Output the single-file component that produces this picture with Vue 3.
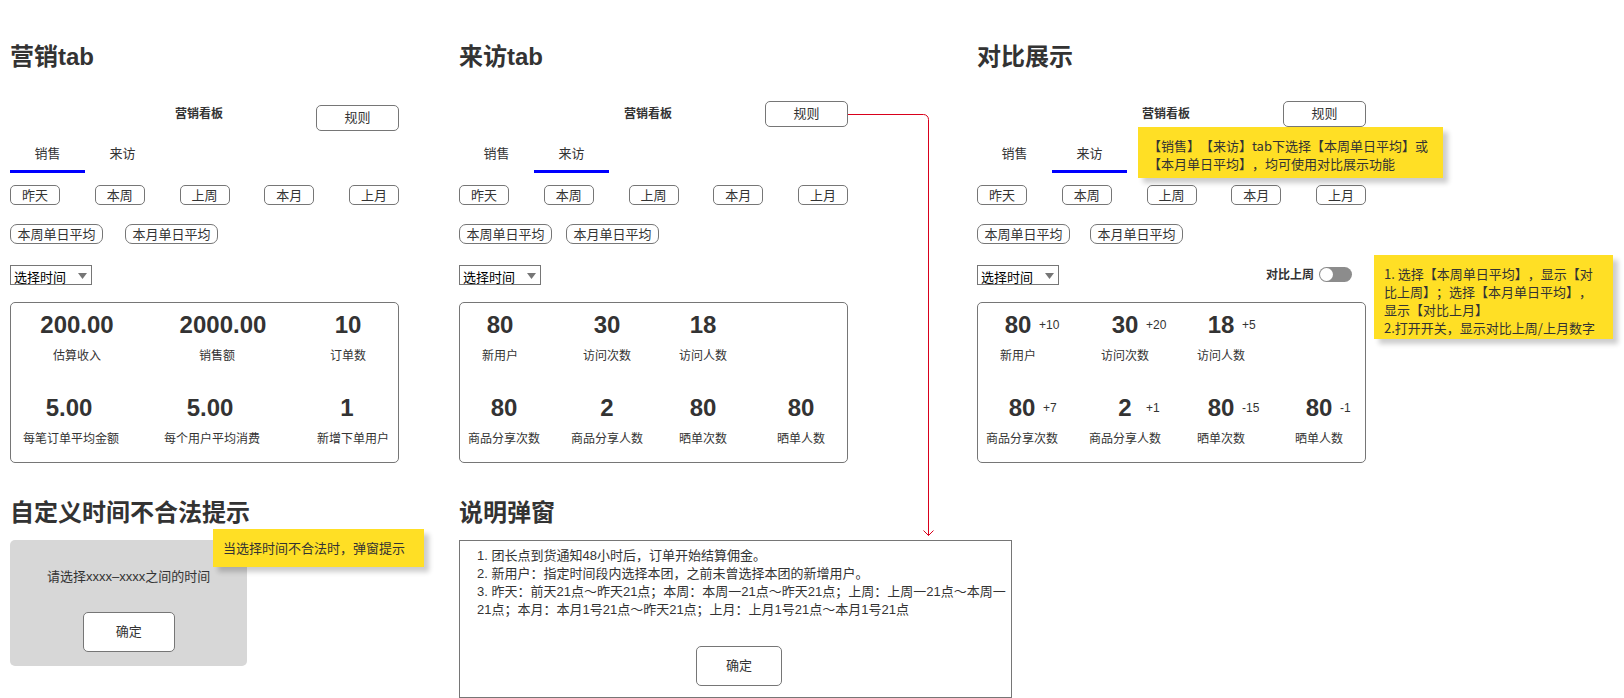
<script setup>
import { ref } from 'vue'

const periods = ['昨天', '本周', '上周', '本月', '上月']
const averages = ['本周单日平均', '本月单日平均']
const tabs = ['销售', '来访']
const compare = ref(false)

const visitRows = [
  {
    name: 'users',
    values: ['80', '30', '18'],
    labels: ['新用户', '访问次数', '访问人数']
  },
  {
    name: 'shares',
    values: ['80', '2', '80', '80'],
    labels: ['商品分享次数', '商品分享人数', '晒单次数', '晒单人数']
  }
]

const panels = [
  {
    id: 'sales',
    title: '营销tab',
    activeTab: 0,
    rows: [
      { name: 'totals', values: ['200.00', '2000.00', '10'], labels: ['估算收入', '销售额', '订单数'] },
      { name: 'means', values: ['5.00', '5.00', '1'], labels: ['每笔订单平均金额', '每个用户平均消费', '新增下单用户'] }
    ]
  },
  { id: 'visits', title: '来访tab', activeTab: 1, rows: visitRows },
  {
    id: 'compare',
    title: '对比展示',
    activeTab: 1,
    rows: [
      { ...visitRows[0], deltas: ['+10', '+20', '+5'] },
      { ...visitRows[1], deltas: ['+7', '+1', '-15', '-1'] }
    ]
  }
]
</script>

<template>
  <main class="board">
    <section v-for="p in panels" :key="p.id" class="panel" :class="p.id">
      <h1 class="title">{{ p.title }}</h1>
      <header class="head">
        <h2 class="name">营销看板</h2>
        <button type="button" class="btn rule">规则</button>
      </header>

      <nav class="tabs">
        <button
          v-for="(t, i) in tabs"
          :key="t"
          type="button"
          class="tab"
          :class="{ active: i === p.activeTab }"
        >{{ t }}</button>
      </nav>

      <div class="periods">
        <button v-for="t in periods" :key="t" type="button" class="btn chip period">{{ t }}</button>
      </div>
      <div class="averages">
        <button v-for="t in averages" :key="t" type="button" class="btn chip average">{{ t }}</button>
      </div>

      <div class="filters">
        <div class="picker">
          <select class="select" aria-label="选择时间">
            <option>选择时间</option>
          </select>
          <svg class="caret" width="9" height="6" viewBox="0 0 9 6" aria-hidden="true">
            <path d="M0 0H9L4.5 6Z" fill="#767676" />
          </svg>
        </div>
        <label v-if="p.id === 'compare'" class="switch">
          <span>对比上周</span>
          <input v-model="compare" type="checkbox" role="switch" class="toggle" />
        </label>
      </div>

      <div class="stats">
        <div v-for="r in p.rows" :key="r.name" class="row" :class="r.name">
          <div class="line values">
            <div v-for="(v, i) in r.values" :key="i" class="cell">
              <strong class="value">{{ v }}</strong>
              <span v-if="r.deltas" class="delta">{{ r.deltas[i] }}</span>
            </div>
          </div>
          <div class="line labels">
            <div v-for="l in r.labels" :key="l" class="cell">{{ l }}</div>
          </div>
        </div>
      </div>

      <svg
        v-if="p.id === 'visits'"
        class="connector"
        width="88"
        height="428"
        viewBox="0 0 88 428"
        fill="none"
        stroke="#d9001b"
        aria-hidden="true"
      >
        <path d="M0 4.5H75.5A5 5 0 0 1 80.5 9.5V425.5" />
        <path d="M75.5 420.5L80.5 425.5L85.5 420.5" />
      </svg>
      <template v-if="p.id === 'compare'">
        <p class="note note-usage">【销售】【来访】tab下选择【本周单日平均】或【本月单日平均】，均可使用对比展示功能</p>
        <p class="note note-switch">1. 选择【本周单日平均】，显示【对比上周】；选择【本月单日平均】，显示【对比上月】<br />2.打开开关，显示对比上周/上月数字</p>
      </template>
    </section>

    <section class="invalid">
      <h1 class="title">自定义时间不合法提示</h1>
      <div class="toast">
        <p class="toast-text">请选择xxxx–xxxx之间的时间</p>
        <button type="button" class="btn ok">确定</button>
      </div>
      <p class="note note-invalid">当选择时间不合法时，弹窗提示</p>
    </section>

    <section class="explain">
      <h1 class="title">说明弹窗</h1>
      <div class="dialog">
        <p class="dialog-text">1. 团长点到货通知48小时后，订单开始结算佣金。<br />2. 新用户：指定时间段内选择本团，之前未曾选择本团的新增用户。<br />3. 昨天：前天21点～昨天21点；本周：本周一21点～昨天21点；上周：上周一21点～本周一21点；本月：本月1号21点～昨天21点；上月：上月1号21点～本月1号21点</p>
        <button type="button" class="btn confirm">确定</button>
      </div>
    </section>
  </main>
</template>

<style>
body {
  margin: 0;
  background: #fff;
}
</style>

<style scoped>
.board {
  display: grid;
  grid-template-columns: minmax(0, 1fr) 60px minmax(0, 1fr) 129px minmax(0, 1fr);
  row-gap: 33px;
  padding: 40px 258px 0 10px;
  color: #333;
  font-family: "Liberation Sans", "Noto Sans CJK SC", sans-serif;
  font-size: 13px;
  line-height: 18px;
  text-spacing-trim: space-all;
}
.board * {
  box-sizing: border-box;
}
p {
  margin: 0;
}
.panel,
.invalid {
  position: relative;
}
.sales,
.invalid {
  grid-column: 1;
}
.visits {
  grid-column: 3;
}
.compare {
  grid-column: 5;
}
.explain {
  grid-column: 3 / 6;
}
.title {
  margin: 0;
  font-size: 24px;
  line-height: 34px;
  font-weight: 700;
  white-space: nowrap;
}
.head {
  display: flex;
  justify-content: flex-end;
  align-items: flex-start;
  gap: 93px;
  height: 30px;
  margin-top: 27px;
}
.name {
  margin: 0;
  font-size: 12px;
  line-height: 26px;
  font-weight: 700;
}
.btn {
  padding: 0;
  border: 1px solid #767676;
  border-radius: 5px;
  background: #fff;
  color: #333;
  font: inherit;
  white-space: nowrap;
}
.rule {
  width: 83px;
  height: 26px;
}
.sales .rule {
  align-self: flex-end;
}
.tabs {
  display: flex;
  margin-top: 6px;
}
.tab {
  width: 75px;
  height: 36px;
  padding: 0;
  border: 0;
  border-bottom: 3px solid transparent;
  background: none;
  color: #333;
  font: inherit;
}
.tab.active {
  border-bottom-color: #00f;
}
.chip {
  height: 20px;
  padding-top: 2px;
  line-height: 16px;
}
.periods {
  display: flex;
  justify-content: space-between;
  margin-top: 12px;
}
.period {
  width: 50px;
}
.averages {
  display: flex;
  gap: 22px;
  margin-top: 19px;
}
.visits .averages {
  gap: 14px;
}
.compare .averages {
  gap: 20px;
}
.average {
  width: 93px;
  border-radius: 7px;
}
.filters {
  display: flex;
  justify-content: space-between;
  align-items: center;
  height: 20px;
  margin-top: 21px;
  padding-right: 14px;
}
.picker {
  position: relative;
}
.select {
  display: block;
  width: 82px;
  height: 20px;
  padding: 3px 0 0 3px;
  border: 1px solid #767676;
  border-radius: 0;
  background: #fff;
  color: #000;
  font: inherit;
  appearance: none;
}
.caret {
  position: absolute;
  top: 8px;
  right: 5px;
  pointer-events: none;
}
.switch {
  display: flex;
  align-items: flex-start;
  gap: 5px;
  font-size: 12px;
  font-weight: 700;
}
.toggle {
  display: flex;
  align-items: center;
  width: 33px;
  height: 15px;
  margin: 1px 0 0;
  padding: 0 1px;
  border-radius: 8px;
  background: #8c8c8c;
  appearance: none;
}
.toggle::before {
  content: "";
  width: 13px;
  height: 13px;
  border-radius: 50%;
  background: #fff;
}
.toggle:checked {
  justify-content: flex-end;
}
.stats {
  display: flex;
  flex-direction: column;
  gap: 30px;
  margin-top: 17px;
  padding: 8px 0 15px;
  border: 1px solid #767676;
  border-radius: 5px;
}
.row {
  display: flex;
  flex-direction: column;
  gap: 9px;
}
.line {
  display: grid;
}
.cell {
  display: flex;
  justify-content: center;
  width: 72px;
  white-space: nowrap;
}
.sales .cell {
  width: 96px;
}
.values {
  line-height: 28px;
}
.value {
  font-size: 24px;
}
.labels {
  font-size: 12px;
  line-height: 16px;
}
.totals .values {
  padding-left: 18px;
  grid-template-columns: 146fr 125fr 98fr;
}
.totals .labels {
  padding-left: 18px;
  grid-template-columns: 140fr 131fr 98fr;
}
.means .values {
  padding-left: 10px;
  grid-template-columns: 141fr 137fr 99fr;
}
.means .labels {
  padding-left: 12px;
  grid-template-columns: minmax(0, 141fr) minmax(0, 141fr) minmax(0, 93fr);
}
.users .line {
  padding-left: 4px;
  grid-template-columns: 107fr 96fr 98fr 82fr;
}
.shares .line {
  padding-left: 8px;
  grid-template-columns: 103fr 96fr 98fr 82fr;
}
.compare .values .cell {
  display: grid;
  grid-template-columns: 15px 42px 15px;
}
.compare .value {
  grid-column: 2;
  text-align: center;
}
.delta {
  grid-column: 3;
  font-size: 12px;
}
.connector {
  position: absolute;
  left: 100%;
  top: 70px;
}
.note {
  position: absolute;
  padding: 10px;
  background: #ffdf25;
  box-shadow: 5px 5px 5px rgba(0, 0, 0, 0.2);
  font-family: "Noto Sans CJK SC", sans-serif;
}
.note-usage {
  left: 161px;
  top: 87px;
  width: 305px;
  height: 51px;
}
.note-switch {
  left: 397px;
  top: 215px;
  width: 239px;
  height: 84px;
}
.note-invalid {
  left: 203px;
  top: 33px;
  width: 211px;
}
.toast {
  display: flex;
  flex-direction: column;
  align-items: center;
  gap: 26px;
  width: 61%;
  margin-top: 10px;
  padding: 28px 0 14px;
  border-radius: 5px;
  background: #d7d7d7;
}
.ok {
  width: 92px;
  height: 40px;
}
.dialog {
  display: flex;
  flex-direction: column;
  align-items: center;
  gap: 27px;
  width: 61%;
  margin-top: 10px;
  padding: 6px 4px 11px 11px;
  border: 1px solid #767676;
}
.dialog-text {
  width: 100%;
  padding-left: 6px;
}
.confirm {
  width: 86px;
  height: 40px;
}
</style>
